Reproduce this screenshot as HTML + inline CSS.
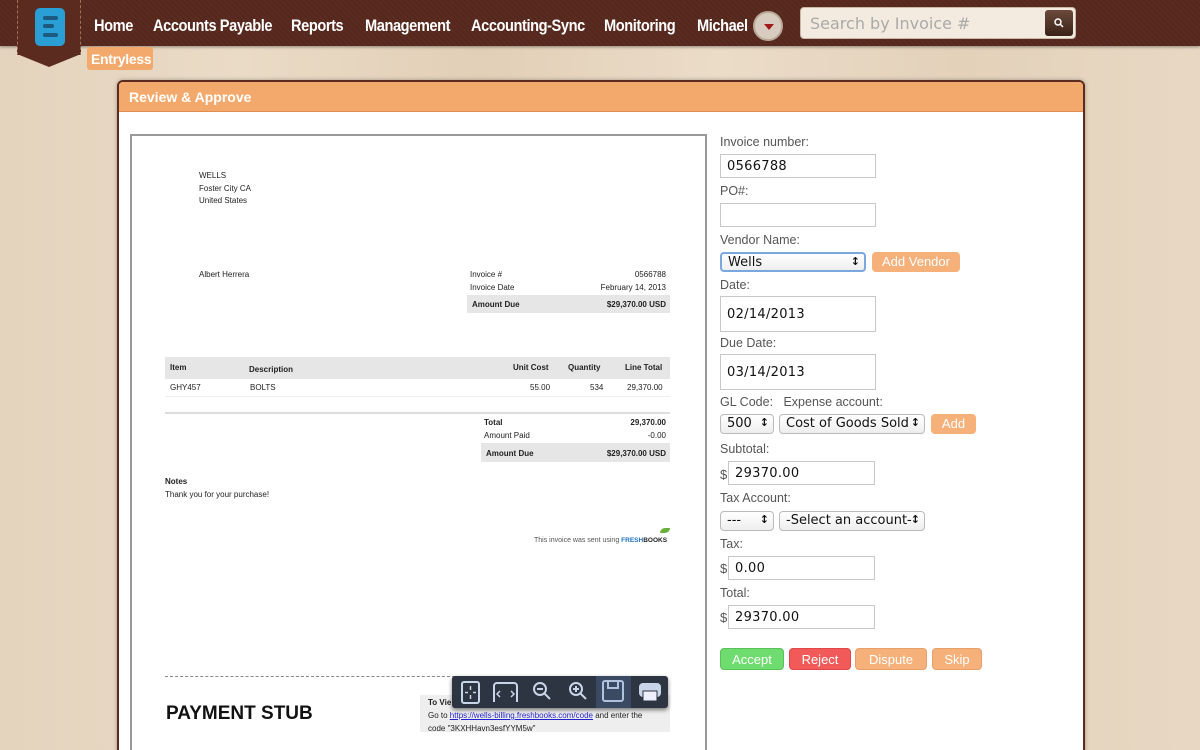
<!DOCTYPE html>
<html><head><meta charset="utf-8">
<style>
*{margin:0;padding:0;box-sizing:border-box}
html,body{width:1200px;height:750px;overflow:hidden}
body{position:relative;font-family:"Liberation Sans",sans-serif;
background:linear-gradient(90deg,#e4d3bd 0,#eadbc6 20%,#e2cfb7 40%,#ebdcc8 60%,#e3d1ba 80%,#e8d8c3 100%);}
.a{position:absolute}
#hdr{left:0;top:0;width:1200px;height:46px;background:#5b2b20;background-image:repeating-linear-gradient(45deg,rgba(0,0,0,.08) 0 2px,transparent 2px 4px);box-shadow:0 1px 3px rgba(0,0,0,.4)}
.nav{top:16px;color:#fff;font-size:17px;font-weight:bold;letter-spacing:-0.5px;transform:scaleX(.86);transform-origin:left top;white-space:nowrap}
#badge{left:17px;top:0;width:64px;height:55px;background:#5b2b20;border-left:1px dashed #a0705a;border-right:1px dashed #a0705a}
#badgept{left:17px;top:54px;width:0;height:0;border-left:32px solid transparent;border-right:32px solid transparent;border-top:13px solid #5b2b20}
#logo{left:35px;top:8px;width:30px;height:38px;background:#2a9fd6;border-radius:5px}
.lb{position:absolute;left:8px;height:4px;background:#1c5a80;border-radius:2px}
#ent{left:87px;top:47px;width:66px;height:23px;background:#f3a96b;border-radius:3px;color:#fff;font-size:14px;font-weight:bold;padding:4px 4px;letter-spacing:-.3px}
#search{left:800px;top:7px;width:276px;height:32px;background:#f3ebe0;border-radius:4px;border:1px solid #c9b8a6}
#panel{left:117px;top:80px;width:968px;height:690px;background:#fff;border:2px solid #5b2b20;border-radius:6px;box-shadow:0 0 4px rgba(0,0,0,.3)}
#ph{left:119px;top:82px;width:964px;height:30px;background:#f4a96c;border-radius:4px 4px 0 0;color:#fff;font-weight:bold;font-size:14px;padding:7px 10px;border-bottom:1px solid #e08d4f}
#doc{left:130px;top:134px;width:577px;height:620px;border:2px solid #999;border-bottom:none;background:#fff}
.t{font-size:8px;color:#222}
.lbl{left:720px;font-size:12.5px;color:#555}
.inp{left:720px;width:156px;height:24px;border:1px solid #c8c8c8;font-size:13px;color:#111;padding:4px 6px;background:#fff;font-family:"DejaVu Sans",sans-serif;letter-spacing:.3px}
.sel{height:20px;border:1px solid #bbb;border-radius:4px;background:linear-gradient(#fff,#eee);font-size:13px;padding:1px 6px;color:#111;font-family:"DejaVu Sans",sans-serif}
.sel:after{content:"\2195";position:absolute;right:4px;top:1px;font-size:11px;font-weight:bold}
.btn{height:22px;border-radius:4px;color:#fff;font-size:13px;text-align:center;padding-top:3px}
.g{background:#e6e6e6}
</style></head><body>
<div id="hdr" class="a"></div>
<div id="badge" class="a"></div><div id="badgept" class="a"></div>
<div id="logo" class="a"><div class="lb" style="top:8px;width:15px"></div><div class="lb" style="top:16px;width:11px"></div><div class="lb" style="top:25px;width:15px"></div></div>
<div class="a nav" style="left:94px">Home</div>
<div class="a nav" style="left:153px">Accounts Payable</div>
<div class="a nav" style="left:291px">Reports</div>
<div class="a nav" style="left:365px">Management</div>
<div class="a nav" style="left:471px">Accounting-Sync</div>
<div class="a nav" style="left:604px">Monitoring</div>
<div class="a nav" style="left:697px">Michael</div>
<div class="a" style="left:753px;top:11px;width:30px;height:30px;border-radius:50%;background:#d8ccc0;border:2px solid #b8a898"><div class="a" style="left:9px;top:11px;border-left:5px solid transparent;border-right:5px solid transparent;border-top:6px solid #a01818"></div></div>
<div id="search" class="a"><div class="a" style="left:9px;top:6px;color:#aaa;font-size:16px;font-family:'DejaVu Sans',sans-serif">Search by Invoice #</div>
<div class="a" style="left:244px;top:2px;width:28px;height:26px;background:linear-gradient(#6b4a3c,#3a2218);border-radius:3px">
<svg width="28" height="26" viewBox="0 0 28 26" fill="none" stroke="#fff" stroke-width="1.5"><circle cx="13" cy="12" r="3"/><path d="M15 14l3 3"/></svg></div></div>
<div id="ent" class="a">Entryless</div>
<div id="panel" class="a"></div>
<div id="ph" class="a">Review &amp; Approve</div>
<div id="doc" class="a"></div>
<div class="a t" style="left:199px;top:170px;line-height:12.5px">WELLS<br>Foster City CA<br>United States</div>
<div class="a t" style="left:199px;top:270px">Albert Herrera</div>
<div class="a t" style="left:470px;top:270px">Invoice #</div><div class="a t" style="left:610px;top:270px;width:56px;text-align:right">0566788</div>
<div class="a t" style="left:470px;top:283px">Invoice Date</div><div class="a t" style="left:580px;top:283px;width:86px;text-align:right">February 14, 2013</div>
<div class="a g" style="left:467px;top:295px;width:203px;height:18px"></div>
<div class="a t" style="left:472px;top:300px;font-weight:bold">Amount Due</div><div class="a t" style="left:580px;top:300px;width:86px;text-align:right;font-weight:bold">$29,370.00 USD</div>
<div class="a g" style="left:165px;top:357px;width:505px;height:22px"></div>
<div class="a t" style="left:170px;top:363px;font-weight:bold">Item</div>
<div class="a t" style="left:249px;top:365px;font-weight:bold">Description</div>
<div class="a t" style="left:513px;top:363px;font-weight:bold">Unit Cost</div>
<div class="a t" style="left:568px;top:363px;font-weight:bold">Quantity</div>
<div class="a t" style="left:625px;top:363px;font-weight:bold">Line Total</div>
<div class="a t" style="left:170px;top:383px">GHY457</div><div class="a t" style="left:250px;top:383px">BOLTS</div>
<div class="a t" style="left:530px;top:383px">55.00</div><div class="a t" style="left:590px;top:383px">534</div><div class="a t" style="left:627px;top:383px">29,370.00</div>
<div class="a" style="left:165px;top:396px;width:505px;height:1px;background:#eee"></div>
<div class="a" style="left:165px;top:412px;width:505px;height:2px;background:#ddd"></div>
<div class="a t" style="left:484px;top:418px;font-weight:bold">Total</div><div class="a t" style="left:610px;top:418px;width:56px;text-align:right;font-weight:bold">29,370.00</div>
<div class="a t" style="left:484px;top:431px">Amount Paid</div><div class="a t" style="left:610px;top:431px;width:56px;text-align:right">-0.00</div>
<div class="a g" style="left:481px;top:443px;width:189px;height:19px"></div>
<div class="a t" style="left:486px;top:449px;font-weight:bold">Amount Due</div><div class="a t" style="left:580px;top:449px;width:86px;text-align:right;font-weight:bold">$29,370.00 USD</div>
<div class="a t" style="left:165px;top:477px;font-weight:bold">Notes</div>
<div class="a t" style="left:165px;top:490px">Thank you for your purchase!</div>
<div class="a t" style="left:534px;top:537px;color:#555;font-size:7px">This invoice was sent using <b style="color:#1a70c0;font-size:6.5px">FRESH</b><b style="color:#222;font-size:6.5px">BOOKS</b></div>
<div class="a" style="left:660px;top:528px;width:10px;height:5px;background:#6ab03a;border-radius:5px 0"></div>
<div class="a" style="left:165px;top:676px;width:290px;border-top:1px dashed #888"></div>
<div class="a" style="left:166px;top:703px;font-size:19px;font-weight:bold;color:#111">PAYMENT STUB</div>
<div class="a" style="left:420px;top:695px;width:250px;height:37px;background:#eee"></div>
<div class="a t" style="left:428px;top:698px;font-weight:bold">To Vie</div>
<div class="a t" style="left:428px;top:711px">Go to <u style="color:#22c">https://wells-billing.freshbooks.com/code</u> and enter the</div>
<div class="a t" style="left:428px;top:724px;height:8px;overflow:hidden">code "3KXHHavn3esfYYM5w"</div>
<div class="a" style="left:452px;top:676px;width:216px;height:32px;background:#2d3442;border-radius:3px;box-shadow:0 2px 4px rgba(0,0,0,.5)">
<svg width="216" height="32" viewBox="0 0 216 32" fill="none" stroke="#c8d4e8" stroke-width="2">
<rect x="10" y="6" width="17" height="21" rx="2"/><path d="M18.5 10v4M18.5 19v4M13 16.5h3M21 16.5h3" stroke-width="1.5"/>
<path d="M42 26V10a3 3 0 0 1 3-3h17a3 3 0 0 1 3 3v16"/><path d="M48 15l-3 3 3 3M59 15l3 3-3 3" stroke-width="1.5"/>
<circle cx="88" cy="13" r="6"/><path d="M92 17l6 6M85 13h6"/>
<circle cx="124" cy="13" r="6"/><path d="M128 17l6 6M121 13h6M124 10v6"/>
<rect x="151" y="5" width="20" height="20" rx="2"/><rect x="156" y="5" width="10" height="7"/>
<rect x="188" y="8" width="20" height="12" rx="3" fill="#c8d4e8"/><rect x="191" y="15" width="14" height="10" fill="#eef" stroke="#2d3442" stroke-width="1"/>
</svg></div>
<div class="a" style="left:596px;top:676px;width:35px;height:32px;background:rgba(100,140,200,.25)"></div>

<div class="a lbl" style="top:135px">Invoice number:</div>
<div class="a inp" style="top:154px">0566788</div>
<div class="a lbl" style="top:184px">PO#:</div>
<div class="a inp" style="top:203px"></div>
<div class="a lbl" style="top:233px">Vendor Name:</div>
<div class="a sel" style="left:720px;top:252px;width:146px;border:2px solid #7aa7e0">Wells</div>
<div class="a btn" style="left:872px;top:252px;width:88px;height:20px;background:#f6b07a;padding-top:2px">Add Vendor</div>
<div class="a lbl" style="top:278px">Date:</div>
<div class="a inp" style="top:296px;height:36px;padding-top:10px">02/14/2013</div>
<div class="a lbl" style="top:336px">Due Date:</div>
<div class="a inp" style="top:354px;height:36px;padding-top:10px">03/14/2013</div>
<div class="a lbl" style="top:395px">GL Code:&nbsp;&nbsp; Expense account:</div>
<div class="a sel" style="left:720px;top:414px;width:54px">500</div>
<div class="a sel" style="left:779px;top:414px;width:146px">Cost of Goods Sold</div>
<div class="a btn" style="left:931px;top:414px;width:45px;height:20px;background:#f6b07a;padding-top:2px">Add</div>
<div class="a lbl" style="top:442px">Subtotal:</div>
<div class="a lbl" style="top:467px;font-size:13px">$</div>
<div class="a inp" style="left:728px;top:461px;width:147px">29370.00</div>
<div class="a lbl" style="top:491px">Tax Account:</div>
<div class="a sel" style="left:720px;top:511px;width:54px">---</div>
<div class="a sel" style="left:779px;top:511px;width:146px">-Select an account-</div>
<div class="a lbl" style="top:537px">Tax:</div>
<div class="a lbl" style="top:561px;font-size:13px">$</div>
<div class="a inp" style="left:728px;top:556px;width:147px">0.00</div>
<div class="a lbl" style="top:586px">Total:</div>
<div class="a lbl" style="top:610px;font-size:13px">$</div>
<div class="a inp" style="left:728px;top:605px;width:147px">29370.00</div>
<div class="a btn" style="left:720px;top:648px;width:64px;background:#6fdc6f;border:1px solid #5ac05a">Accept</div>
<div class="a btn" style="left:789px;top:648px;width:62px;background:#f25a5a;border:1px solid #e04848">Reject</div>
<div class="a btn" style="left:855px;top:648px;width:72px;background:#f6b07a;border:1px solid #e8a06a">Dispute</div>
<div class="a btn" style="left:932px;top:648px;width:50px;background:#f6b07a;border:1px solid #e8a06a">Skip</div>
</body></html>
